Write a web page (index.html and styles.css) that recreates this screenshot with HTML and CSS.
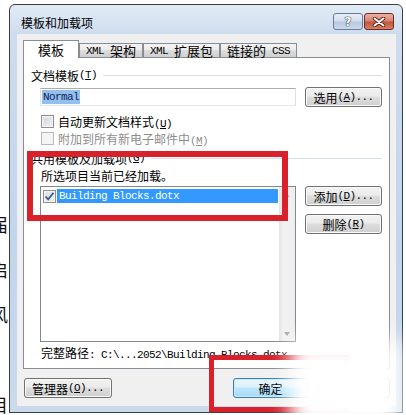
FILE: index.html
```html
<!DOCTYPE html>
<html lang="zh-CN">
<head>
    <meta charset="UTF-8">
    <title>模板和加载项</title>
    <link rel="stylesheet" href="styles.css">
</head>
<body>

<!-- document text behind the dialog -->
<div class="doc">
    <p>届之</p>
    <p>启之</p>
    <p>风之</p>
    <p>&nbsp;</p>
    <p>目之</p>
</div>

<div class="dialog">
    <div class="titlebar">
        <span class="title">模板和加载项</span>
        <div class="caption-btns">
            <span class="cap help">?</span>
            <span class="cap close">
                <svg width="14" height="10" viewBox="0 0 14 10">
                    <path d="M2.5 1.5 L11.5 8.5 M11.5 1.5 L2.5 8.5" stroke="#5a1c14" stroke-width="3.6" stroke-linecap="round"/>
                    <path d="M2.5 1.5 L11.5 8.5 M11.5 1.5 L2.5 8.5" stroke="#fff" stroke-width="2" stroke-linecap="round"/>
                </svg>
            </span>
        </div>
    </div>

    <div class="client">
        <div class="tabs">
            <span class="tab active">模板</span>
            <span class="tab"><span class="lat">XML </span>架构</span>
            <span class="tab"><span class="lat">XML </span>扩展包</span>
            <span class="tab">链接的<span class="lat"> CSS</span></span>
        </div>

        <div class="panel">
            <div class="group-head">文档模板<span class="lat">(<u>T</u>)</span></div>
            <div class="template-row">
                <div class="textbox"><span class="sel lat">Normal</span></div>
                <button class="btn">选用<span class="lat">(<u>A</u>)...</span></button>
            </div>
            <div class="check-row first">
                <span class="box"></span>
                <span>自动更新文档样式<span class="lat">(<u>U</u>)</span></span>
            </div>
            <div class="check-row disabled">
                <span class="box"></span>
                <span>附加到所有新电子邮件中<span class="lat">(<u>M</u>)</span></span>
            </div>

            <div class="group-head second">共用模板及加载项<span class="lat">(<u>G</u>)</span></div>
            <div class="hint">所选项目当前已经加载。</div>
            <div class="list-row">
                <div class="listbox">
                    <div class="list-items">
                        <div class="item">
                            <span class="box checked">
                                <svg width="11" height="11" viewBox="0 0 11 11">
                                    <path d="M1.5 5.5 L4.2 8.3 L9.5 1.8" fill="none" stroke="#3f5591" stroke-width="1.8"/>
                                </svg>
                            </span>
                            <span class="item-text lat">Building Blocks.dotx</span>
                        </div>
                    </div>
                    <div class="scroll">
                        <span class="arrow up"></span>
                        <span class="arrow down"></span>
                    </div>
                </div>
                <div class="side-btns">
                    <button class="btn">添加<span class="lat">(<u>D</u>)...</span></button>
                    <button class="btn">删除<span class="lat">(<u>R</u>)</span></button>
                </div>
            </div>
            <div class="path">完整路径<span class="lat">: C:\...2052\Building Blocks.dotx</span></div>
        </div>

        <div class="dlg-buttons">
            <button class="btn manager">管理器<span class="lat">(<u>O</u>)...</span></button>
            <button class="btn default">确定</button>
            <button class="btn">取消</button>
        </div>
    </div>
</div>

<!-- annotation marks drawn over the screenshot -->
<div class="mark mark-list"></div>
<div class="mark mark-ok"></div>
<div class="smudge"></div>

</body>
</html>
```

FILE: styles.css
```css
* {
    box-sizing: border-box;
}
body {
    margin: 0;
    width: 406px;
    height: 415px;
    overflow: hidden;
    position: relative;
    background: #fff;
    font-family: "Noto Sans CJK SC", sans-serif;
    font-size: 12px;
    color: #000;
}
.lat {
    font-family: "Liberation Mono", "Noto Sans CJK SC", monospace;
    font-size: 11px;
    letter-spacing: -0.6px;
}
u {
    text-decoration-thickness: 1px;
    text-underline-offset: 1px;
}

/* text of the document behind */
.doc {
    padding-top: 202px;
    margin-left: -10px;
    font-size: 18px;
    line-height: 45px;
    color: #111;
}
.doc p {
    margin: 0;
}

/* window frame */
.dialog {
    position: absolute;
    left: 9px;
    top: 4px;
    width: 394px;
    height: 409px;
    border: 1px solid #3a3d42;
    border-radius: 6px 6px 0 0;
    background: linear-gradient(#e2ebf6, #cddcee 30px, #c1d5eb 60%, #c9daed);
    display: flex;
    flex-direction: column;
}
.titlebar {
    height: 29px;
    display: flex;
    justify-content: space-between;
    align-items: flex-start;
    padding: 0 8px 0 11px;
}
.title {
    margin-top: 10px;
    line-height: 16px;
}
.caption-btns {
    display: flex;
    gap: 1px;
    margin-top: 8px;
}
.cap {
    width: 30px;
    height: 17px;
    border: 1px solid #6b7b93;
    border-radius: 3px;
    display: flex;
    align-items: center;
    justify-content: center;
}
.help {
    background: linear-gradient(#e8eff8, #d2dded 48%, #b9c9de 52%, #cad9ec);
    color: #fff;
    font-family: "DejaVu Sans", sans-serif;
    font-weight: bold;
    font-size: 12px;
    text-shadow: 0 0 1px #2e3b52, 0 0 1px #2e3b52, 0 0 1px #2e3b52;
}
.close {
    border-color: #6d2c26;
    background: linear-gradient(#eab0a2, #d9826f 48%, #c4523c 52%, #d58066);
}

/* client area */
.client {
    flex: 1;
    margin: 0 6px 6px 7px;
    padding: 6px 6px 0;
    background: #f0f0f0;
}
.tabs {
    display: flex;
    align-items: flex-end;
    height: 17px;
    position: relative;
    z-index: 1;
}
.tab {
    height: 14px;
    padding: 0 6px;
    border: 1px solid #898c95;
    border-bottom: none;
    background: linear-gradient(#f3f3f3, #ebebeb 50%, #dddddd 50%, #cfcfcf);
    font-size: 13px;
    display: flex;
    align-items: center;
    white-space: pre;
}
.tab.active {
    height: 18px;
    margin-bottom: -1px;
    padding: 0 14px;
    background: #fff;
}
.panel {
    height: 312px;
    background: #fff;
    border: 1px solid #898c95;
    padding: 9px 7px 0;
}
.group-head {
    display: flex;
    align-items: center;
    height: 16px;
}
.group-head::after {
    content: "";
    flex: 1;
    margin-left: 6px;
    border-top: 1px solid #d5dfe5;
}
.group-head.second {
    margin-top: 3px;
}
.template-row {
    display: flex;
    justify-content: space-between;
    align-items: center;
    height: 20px;
    margin: 4px 0 0 9px;
}
.textbox {
    width: 256px;
    height: 18px;
    border: 1px solid #abadb3;
    border-color: #abadb3 #dbdfe6 #e3e9ef #e2e3ea;
    padding: 1px;
    display: flex;
}
.sel {
    background: #93c0ee;
    color: #0b1f5c;
    line-height: 14px;
    padding: 0 1px;
}
.check-row {
    display: flex;
    align-items: center;
    gap: 4px;
    height: 17px;
    margin-left: 10px;
}
.check-row.first {
    margin-top: 6px;
}
.box {
    width: 13px;
    height: 13px;
    flex: none;
    border: 1px solid #8e8f8f;
    background: linear-gradient(135deg, #cbcfd5, #f7f7f7);
    box-shadow: inset 0 0 0 1px #f4f4f4, inset 0 0 0 2px #e6e8ea;
    display: flex;
    align-items: center;
    justify-content: center;
}
.disabled {
    color: #8d8d8d;
}
.disabled .box {
    border-color: #b9b9b9;
    background: #f4f4f4;
    box-shadow: none;
}
.hint {
    height: 16px;
    margin-top: 2px;
    padding-left: 10px;
    line-height: 16px;
}
.list-row {
    display: flex;
    justify-content: space-between;
    margin: 2px 0 0 9px;
}
.listbox {
    width: 256px;
    height: 156px;
    border: 1px solid #828790;
    display: flex;
}
.list-items {
    flex: 1;
    padding: 2px 0 0 2px;
}
.item {
    display: flex;
    align-items: center;
}
.box.checked {
    background: linear-gradient(135deg, #d4d8dd, #fbfbfb);
}
.item-text {
    flex: 1;
    margin: 0 1px 0 1px;
    height: 14px;
    line-height: 14px;
    padding-left: 2px;
    background: #3399ff;
    color: #fff;
}
.scroll {
    width: 16px;
    background: linear-gradient(to right, #e4e4e4, #f2f2f2 30%, #eeeeee);
    display: flex;
    flex-direction: column;
    justify-content: space-between;
    align-items: center;
    padding: 6px 0 5px;
}
.arrow {
    width: 0;
    height: 0;
    border-left: 3.5px solid transparent;
    border-right: 3.5px solid transparent;
}
.arrow.up {
    border-bottom: 4px solid #b4b4b4;
}
.arrow.down {
    border-top: 4px solid #a8a8a8;
}
.side-btns {
    display: flex;
    flex-direction: column;
    gap: 8px;
}
.path {
    height: 16px;
    margin-top: 3px;
    padding-left: 10px;
    line-height: 16px;
    white-space: nowrap;
}

/* push buttons */
.btn {
    width: 77px;
    height: 20px;
    padding: 0;
    border: 1px solid #707070;
    border-radius: 3px;
    background: linear-gradient(#f2f2f2, #ebebeb 45%, #dddddd 50%, #cfcfcf);
    box-shadow: inset 0 0 0 1px #fbfbfb;
    font-family: inherit;
    font-size: 12px;
    color: #000;
    display: flex;
    align-items: center;
    justify-content: center;
    white-space: nowrap;
}
.btn.default {
    border-color: #3c7fb1;
    background: linear-gradient(#eaf6fd, #d9f0fc 45%, #bee6fd 50%, #a7d9f5);
    box-shadow: inset 0 0 0 1px #c6ecfb;
}
.dlg-buttons {
    display: flex;
    gap: 7px;
    margin-top: 9px;
    padding-left: 1px;
}
.dlg-buttons .btn {
    width: 75px;
}
.dlg-buttons .manager {
    width: 88px;
    margin-right: auto;
}

/* red marks and the blurred spot */
.mark {
    position: absolute;
    border: 6px solid #d8212b;
}
.mark-list {
    left: 27px;
    top: 151px;
    width: 261px;
    height: 70px;
}
.mark-ok {
    left: 209px;
    top: 355px;
    width: 140px;
    height: 57px;
    border-width: 5px;
}
.smudge {
    position: absolute;
    left: 290px;
    top: 340px;
    width: 112px;
    height: 90px;
    background: #fff;
    filter: blur(10px);
}
```
